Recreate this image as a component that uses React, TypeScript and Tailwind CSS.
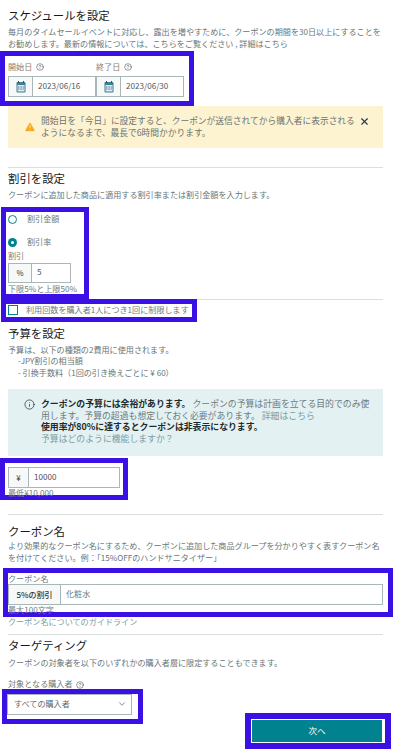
import { ChevronDown, CircleHelp, Info, TriangleAlert, X } from "lucide-react";

const Heading = ({ children }: { children: string }) => (
  <h2 className="text-[11.4px] leading-[16px] text-[#16191a]">{children}</h2>
);

const Desc = ({ children }: { children: React.ReactNode }) => (
  <p className="text-[8.1px] leading-[11.5px] text-[#687577]">{children}</p>
);

const Divider = () => <div className="h-px w-[375px] bg-[#dcdfdf]" />;

const CalendarIcon = () => (
  <svg width="10" height="12" viewBox="0 0 10 12" className="shrink-0">
    <rect x="0.5" y="1" width="9" height="10.5" rx="1" fill="#3f7f93" />
    <rect x="1.5" y="4" width="7" height="6.5" fill="#dbe9ee" />
    <rect x="2" y="0" width="1" height="2" fill="#27566a" />
    <rect x="7" y="0" width="1" height="2" fill="#27566a" />
    <path d="M2 6h6M2 8h6" stroke="#48798c" strokeWidth="1" strokeDasharray="1 0.6" />
  </svg>
);

const DateField = ({ label, value }: { label: string; value: string }) => (
  <div className="w-[88px]">
    <div className="flex h-[14px] items-center gap-1 text-[8.1px] text-[#8b7b66]">
      {label}
      <CircleHelp size={8} strokeWidth={1.5} className="text-[#2e3a3c]" />
    </div>
    <div className="mt-[2px] flex h-[21px] border border-[#a9b7b8] bg-white">
      <div className="flex w-[24px] items-center justify-center border-r border-[#a9b7b8] bg-[#f7f8f8]">
        <CalendarIcon />
      </div>
      <div className="flex flex-1 items-center pl-[5px] text-[8.1px] text-[#4d5c5e]">{value}</div>
    </div>
  </div>
);

const Radio = ({ label, checked }: { label: string; checked?: boolean }) => (
  <div className="flex h-[12px] items-center gap-[10px]">
    {checked ? (
      <span className="flex size-[9px] items-center justify-center rounded-full bg-[#00838f]">
        <span className="size-[3px] rounded-full bg-white" />
      </span>
    ) : (
      <span className="size-[9px] rounded-full border border-[#00838f]" />
    )}
    <span className="text-[8.1px] text-[#6d7a7c]">{label}</span>
  </div>
);

export default function App() {
  return (
    <div
      className="h-[749px] w-[408px] overflow-hidden bg-white pl-2"
      style={{ fontFamily: '"Noto Sans CJK JP", "Noto Sans", sans-serif' }}
    >
      {/* スケジュール */}
      <div className="pt-[7px]">
        <Heading>スケジュールを設定</Heading>
      </div>
      <div className="mt-[3px] w-[378px]">
        <Desc>
          毎月のタイムセールイベントに対応し、露出を増やすために、クーポンの期間を30日以上にすることを
          <br />
          お勧めします。最新の情報については、こちらをご覧ください , 詳細はこちら
        </Desc>
      </div>
      <div className="-ml-2 mt-[2px] flex h-[55px] w-[194px] border-[5px] border-[#3a10e5] pl-[3px] pt-[4px]">
        <DateField label="開始日" value="2023/06/16" />
        <DateField label="終了日" value="2023/06/30" />
      </div>

      <div className="flex h-[42px] w-[375px] items-center bg-[#fdf3d0] pl-4">
        <TriangleAlert size={12} fill="#f4a91f" stroke="#fdf3d0" strokeWidth={1.5} className="shrink-0" />
        <p className="ml-[5px] w-[316px] whitespace-nowrap text-[8.74px] leading-[12px] text-[#6d7474]">
          開始日を「今日」に設定すると、クーポンが送信されてから購入者に表示される
          <br />
          ようになるまで、最長で6時間かかります。
        </p>
        <X size={11} strokeWidth={2.5} className="-mt-[12px] ml-[2px] shrink-0 text-[#2b3a4a]" />
      </div>

      <div className="mt-[19px]">
        <Divider />
      </div>

      {/* 割引 */}
      <div className="mt-[2px]">
        <Heading>割引を設定</Heading>
      </div>
      <div className="mt-[3px]">
        <Desc>クーポンに追加した商品に適用する割引率または割引金額を入力します。</Desc>
      </div>
      <div className="-ml-[7px] mt-[6px] flex h-[92px] w-[88px] flex-col border-[5px] border-[#3a10e5] pl-[2px] pt-[1px]">
        <div className="pt-[1px]">
          <Radio label="割引金額" />
        </div>
        <div className="pt-[11px]">
          <Radio label="割引率" checked />
        </div>
        <div className="mt-[1px] text-[8.1px] leading-[12px] text-[#8b7b66]">割引</div>
        <div className="mt-[1px] flex h-[21px] w-[63px] border border-[#a9b7b8]">
          <div className="flex w-[23px] items-center justify-center border-r border-[#a9b7b8] bg-[#f7f8f8] text-[7.5px] font-medium text-[#4d5c5e]">
            %
          </div>
          <div className="flex flex-1 items-center pl-[5px] text-[8.1px] text-[#4d5c5e]">5</div>
        </div>
        <div className="text-[8.1px] leading-[11px] text-[#6d7a7c]">下限5%と上限50%</div>
      </div>
      <Divider />
      <div className="-ml-[7px] -mt-px flex h-[23px] w-[196px] items-center border-[5px] border-[#3a10e5] pl-[2px]">
        <span className="size-[10px] border border-[#00838f]" />
        <span className="ml-2 whitespace-nowrap text-[8.1px] text-[#6d7a7c]">
          利用回数を購入者1人につき1回に制限します
        </span>
      </div>

      {/* 予算 */}
      <div className="mt-[3px]">
        <Heading>予算を設定</Heading>
      </div>
      <div className="mt-[3px]">
        <Desc>予算は、以下の種類の2費用に使用されます。</Desc>
        <div className="pl-[10px]">
          <Desc>-JPY割引の相当額</Desc>
          <Desc>- 引換手数料（1回の引き換えごとに ¥ 60）</Desc>
        </div>
      </div>
      <div className="mt-[11px] flex h-[67px] w-[375px] bg-[#e3f1f3] pl-4 pt-[9px]">
        <Info size={11} strokeWidth={1.5} className="mt-[1px] shrink-0 text-[#1c2a2c]" />
        <div className="ml-[6px] w-[330px] whitespace-nowrap text-[8.85px] leading-[11.7px] text-[#6d7a7c]">
          <p>
            <span className="font-bold text-[#20292b]">クーポンの予算には余裕があります。</span>{" "}
            クーポンの予算は計画を立てる目的でのみ使
            <br />
            用します。予算の超過も想定しておく必要があります。{" "}
            <span className="text-[#7d9ca3]">詳細はこちら</span>
          </p>
          <p className="font-bold text-[#20292b]">使用率が80%に達するとクーポンは非表示になります。</p>
          <p className="text-[#7d9ca3]">予算はどのように機能しますか？</p>
        </div>
      </div>
      <div className="-ml-2 mt-[2px] h-[42px] w-[128px] border-[5px] border-[#3a10e5] pl-[3px] pt-[4px]">
        <div className="flex h-[21px] w-[112px] border border-[#a9b7b8]">
          <div className="flex w-[20px] items-center justify-center border-r border-[#a9b7b8] bg-[#f7f8f8] text-[8px] text-[#333]">
            ¥
          </div>
          <div className="flex flex-1 items-center pl-[5px] text-[8.1px] text-[#5b4a55]">10000</div>
        </div>
        <div className="text-[8.1px] leading-[10px] text-[#6d7a7c]">最低¥10,000</div>
      </div>

      <div className="mt-[14px]">
        <Divider />
      </div>

      {/* クーポン名 */}
      <div className="mt-[8px]">
        <Heading>クーポン名</Heading>
      </div>
      <div className="mt-[1px] w-[378px]">
        <Desc>
          より効果的なクーポン名にするため、クーポンに追加した商品グループを分かりやすく表すクーポン名
          <br />
          を付けてください。例：「15%OFFのハンドサニタイザー」
        </Desc>
      </div>
      <div className="-ml-[5px] mt-[5px] h-[49px] w-[390px] border-[5px] border-[#3a10e5] pl-0">
        <div className="text-[8.1px] leading-[11px] text-[#6d7a7c]">クーポン名</div>
        <div className="flex h-[21px] w-[375px] border border-[#a9b7b8]">
          <div className="flex w-[52px] items-center justify-center border-r border-[#a9b7b8] bg-[#f7f8f8] text-[8px] font-medium text-[#333]">
            5%の割引
          </div>
          <div className="flex flex-1 items-center pl-[5px] text-[8.1px] text-[#6d7a7c]">化粧水</div>
        </div>
        <div className="text-[8.1px] leading-[9px] text-[#6d7a7c]">最大100文字</div>
      </div>
      <div className="text-[8.1px] leading-[10px] text-[#7d9ca3]">クーポン名についてのガイドライン</div>

      <div className="mt-[7px]">
        <Divider />
      </div>

      {/* ターゲティング */}
      <div className="mt-[2px]">
        <Heading>ターゲティング</Heading>
      </div>
      <div className="mt-[4px]">
        <Desc>クーポンの対象者を以下のいずれかの購入者層に限定することもできます。</Desc>
      </div>
      <div className="mt-[10px] flex h-[12px] items-center gap-[3px] text-[8.1px] text-[#6d7a7c]">
        対象となる購入者
        <CircleHelp size={8} strokeWidth={1.5} className="text-[#2e3a3c]" />
      </div>
      <div className="-mt-[2px] flex items-start">
        <div className="-ml-[6px] h-[35px] w-[141px] border-[5px] border-[#3a10e5] bg-white">
          <div className="flex h-[21px] w-[125px] items-center justify-between border border-[#a9b7b8] pl-[6px] pr-[4px] text-[8.1px] text-[#5d6a6c]">
            すべての購入者
            <ChevronDown size={10} strokeWidth={2} className="text-[#6d7a7c]" />
          </div>
        </div>
        <div className="ml-[102px] mt-[24px] h-[36px] w-[146px] border-[6px] border-[#3a10e5] bg-white p-px">
          <div className="flex h-[22px] w-[130px] items-center justify-center bg-[#00838f] text-[8.5px] text-white">
            次へ
          </div>
        </div>
      </div>
    </div>
  );
}
